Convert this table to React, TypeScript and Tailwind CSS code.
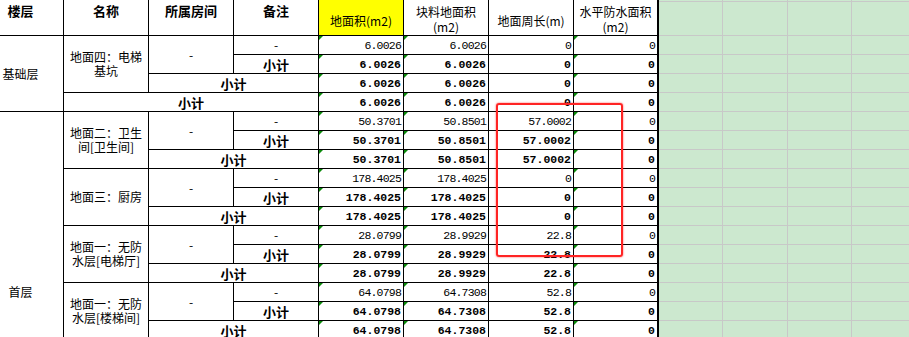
import React from "react";

const cjk = "font-['Noto_Sans_CJK_SC',sans-serif]";
const mono = "font-['Liberation_Mono',monospace]";

type Group = { name: string; v: string[] };

const baseGroups: Group[] = [{ name: "地面四：电梯基坑", v: ["6.0026", "6.0026", "0", "0"] }];

const firstFloorGroups: Group[] = [
  { name: "地面二：卫生间[卫生间]", v: ["50.3701", "50.8501", "57.0002", "0"] },
  { name: "地面三：厨房", v: ["178.4025", "178.4025", "0", "0"] },
  { name: "地面一：无防水层[电梯厅]", v: ["28.0799", "28.9929", "22.8", "0"] },
  { name: "地面一：无防水层[楼梯间]", v: ["64.0798", "64.7308", "52.8", "0"] },
];

function Flag() {
  return (
    <span className="absolute top-0 left-0 w-0 h-0 border-t-[4px] border-r-[4px] border-t-[#0a8a0a] border-r-transparent" />
  );
}

function Values({ v, bold, k }: { v: string[]; bold?: boolean; k: string }) {
  return (
    <>
      {v.map((n, i) => (
        <div
          key={k + i}
          className={`relative bg-white flex items-center justify-end pr-[2px] pt-[1px] text-black text-[11.5px] ${mono} ${
            bold ? "font-bold tracking-[0px]" : "tracking-[-0.8px]"
          }`}
        >
          {i !== 2 && <Flag />}
          {n}
        </div>
      ))}
    </>
  );
}

function SubLabel({ span }: { span: string }) {
  return (
    <div className={`${span} bg-white flex items-center justify-center pt-[2px] text-[13px] font-bold ${cjk}`}>
      小计
    </div>
  );
}

function GroupCells({ g, k }: { g: Group; k: string }) {
  return (
    <>
      <div className={`row-span-3 bg-white flex items-center justify-center px-[4px] text-center text-[12px] leading-[14px] ${cjk}`}>
        {g.name}
      </div>
      <div className={`row-span-2 bg-white flex items-center justify-center text-[12px] ${cjk}`}>-</div>
      <div className={`bg-white flex items-center justify-center text-[12px] ${cjk}`}>-</div>
      <Values v={g.v} k={k + "a"} />
      <SubLabel span="" />
      <Values v={g.v} bold k={k + "b"} />
      <SubLabel span="col-span-2" />
      <Values v={g.v} bold k={k + "c"} />
    </>
  );
}

function FloorCell({ label, span }: { label: string; span: string }) {
  return (
    <div className={`${span} bg-white flex items-center overflow-hidden text-[12px] ${cjk}`}>
      <div className="w-[85px] -ml-[22px] shrink-0 text-center">{label}</div>
    </div>
  );
}

export default function App() {
  const head = "bg-white flex justify-center pt-[3px] text-[13px] font-bold leading-[16px]";
  const head1 = "bg-white flex items-center justify-center text-center text-[12px] leading-[15px] pt-[6px]";
  const head2 = "bg-white flex flex-col items-center text-center text-[12px] leading-[15px] pt-[4px]";
  return (
    <div className={`relative w-[909px] h-[337px] overflow-hidden bg-white flex text-black ${cjk}`}>
      <div className="grid grid-cols-[63px_84px_84px_84px_84px_84px_84px_83px] grid-rows-[35px] auto-rows-[18px] gap-px bg-black border-r-2 border-black self-start">
        {/* header */}
        <div className="bg-white flex items-start overflow-hidden pt-[3px] text-[13px] font-bold leading-[16px]">
          <div className="w-[85px] -ml-[22px] shrink-0 text-center">楼层</div>
        </div>
        <div className={head}>名称</div>
        <div className={head}>所属房间</div>
        <div className={head}>备注</div>
        <div className={`${head1} !bg-[#ffff00]`}>地面积(m2)</div>
        <div className={head2}>
          <span>块料地面积</span>
          <span>(m2)</span>
        </div>
        <div className={head1}>地面周长(m)</div>
        <div className={head2}>
          <span>水平防水面积</span>
          <span>(m2)</span>
        </div>

        {/* 基础层 */}
        <FloorCell label="基础层" span="row-span-4" />
        {baseGroups.map((g, i) => (
          <GroupCells key={"b" + i} g={g} k={"b" + i} />
        ))}
        <SubLabel span="col-span-3" />
        <Values v={baseGroups[0].v} bold k="bsumv" />

        {/* 首层 */}
        <FloorCell label="首层" span="row-span-19" />
        {firstFloorGroups.map((g, i) => (
          <GroupCells key={"f" + i} g={g} k={"f" + i} />
        ))}
      </div>

      {/* sheet area beyond the table */}
      <div className="flex-1 grid grid-cols-[63px_64px_63px_1fr] grid-rows-[1px_33px] auto-rows-[18px] gap-px bg-[#c8c8c8] self-start">
        {Array.from({ length: 4 * 20 }).map((_, i) => (
          <div key={i} className="bg-[#cce8cf]" />
        ))}
      </div>

      {/* highlight box */}
      <div className="absolute left-[496px] top-[103px] w-[127px] h-[154px] border-2 border-[#ff2424] rounded-[3px] shadow-[0_0_2px_rgba(255,0,0,0.7)] pointer-events-none" />
    </div>
  );
}
